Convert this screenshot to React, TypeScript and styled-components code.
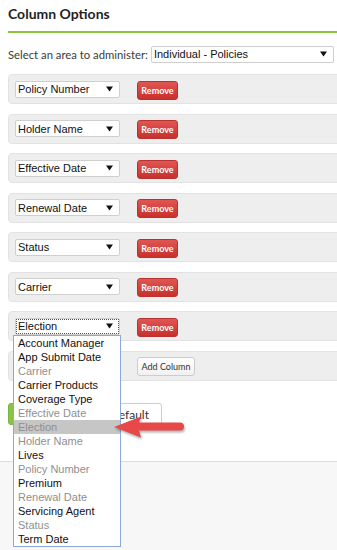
import { createGlobalStyle, styled } from 'styled-components';

const GlobalStyle = createGlobalStyle`
  html, body {
    margin: 0;
    padding: 0;
    background: #ffffff;
    overflow: hidden;
  }
  body {
    font-family: Lato, "Open Sans", sans-serif;
    color: #333333;
  }
  * {
    box-sizing: border-box;
  }
`;

type Option = { label: string; disabled?: boolean };

const OPTIONS: Option[] = [
  { label: 'Account Manager' },
  { label: 'App Submit Date' },
  { label: 'Carrier', disabled: true },
  { label: 'Carrier Products' },
  { label: 'Coverage Type' },
  { label: 'Effective Date', disabled: true },
  { label: 'Election', disabled: true },
  { label: 'Holder Name', disabled: true },
  { label: 'Lives' },
  { label: 'Policy Number', disabled: true },
  { label: 'Premium' },
  { label: 'Renewal Date', disabled: true },
  { label: 'Servicing Agent' },
  { label: 'Status', disabled: true },
  { label: 'Term Date' },
];

const COLUMNS = [
  'Policy Number',
  'Holder Name',
  'Effective Date',
  'Renewal Date',
  'Status',
  'Carrier',
];

const Caret = () => (
  <svg width="7" height="6" viewBox="0 0 7 6">
    <polygon points="0,0.5 7,0.5 3.5,5.5" fill="#111" />
  </svg>
);

const Select = ({
  value,
  width,
  focused,
  children,
}: {
  value: string;
  width: number;
  focused?: boolean;
  children?: React.ReactNode;
}) => (
  <SelectWrap $width={width}>
    <SelectBox $focused={focused}>
      <span>{value}</span>
      <Caret />
    </SelectBox>
    {children}
  </SelectWrap>
);

export default function App() {
  return (
    <>
      <GlobalStyle />
      <Page>
        <Main>
          <Title>Column Options</Title>
          <Rule />
          <AreaRow>
            <Label>Select an area to administer:</Label>
            <Select value="Individual - Policies" width={183} />
          </AreaRow>
          <ColumnList>
            {COLUMNS.map((col) => (
              <ColumnRow key={col}>
                <Select value={col} width={105} />
                <RemoveButton>Remove</RemoveButton>
              </ColumnRow>
            ))}
            <ColumnRow $raised>
              <Select value="Election" width={105} focused>
                <OptionList>
                  {OPTIONS.map((opt) => (
                    <OptionItem
                      key={opt.label}
                      $disabled={opt.disabled}
                      $selected={opt.label === 'Election'}
                    >
                      {opt.label}
                    </OptionItem>
                  ))}
                </OptionList>
              </Select>
              <RemoveButton>Remove</RemoveButton>
            </ColumnRow>
            <ColumnRow>
              <Select value="" width={105} />
              <GhostButton>Add Column</GhostButton>
            </ColumnRow>
          </ColumnList>
          <Actions>
            <SaveButton>Save</SaveButton>
            <DefaultButton>Reset Default</DefaultButton>
          </Actions>
          <Pointer width="76" height="30" viewBox="0 0 76 30">
            <path
              d="M2 13 L29 2.5 L27 8.5 L68 8.5 A4 4 0 0 1 68 16.5 L27 16.5 L29 23.5 Z"
              fill="#e84848"
            />
          </Pointer>
        </Main>
        <Footer />
      </Page>
    </>
  );
}

const Page = styled.div`
  width: 337px;
  height: 550px;
  display: flex;
  flex-direction: column;
`;

const Main = styled.main`
  position: relative;
  padding: 4px 0 0 8px;
  background: #ffffff;
`;

const Title = styled.h2`
  margin: 0;
  height: 20px;
  line-height: 20px;
  font-size: 14px;
  font-weight: 700;
  color: #1f1f1f;
`;

const Rule = styled.div`
  margin-top: 7px;
  height: 2px;
  background: #8cc63f;
`;

const AreaRow = styled.div`
  margin-top: 13px;
  display: flex;
  align-items: center;
  gap: 3px;
  height: 16px;
`;

const Label = styled.span`
  font-size: 11.3px;
  color: #3a3a3a;
  white-space: nowrap;
`;

const SelectWrap = styled.div<{ $width: number }>`
  position: relative;
  width: ${({ $width }) => $width}px;
  flex-shrink: 0;
`;

const SelectBox = styled.div<{ $focused?: boolean }>`
  height: 17px;
  display: flex;
  align-items: center;
  justify-content: space-between;
  padding: 0 6px 0 2px;
  background: #ffffff;
  border: 1px solid #cfcfcf;
  border-radius: 2px;
  font-family: "Liberation Sans", Arial, sans-serif;
  font-size: 11px;
  color: #111111;
  outline: ${({ $focused }) => ($focused ? '1px dotted #555' : 'none')};
  outline-offset: -2px;
`;

const OptionList = styled.ul`
  position: absolute;
  top: 100%;
  left: -2px;
  width: 108px;
  margin: 0;
  padding: 0;
  list-style: none;
  background: #ffffff;
  border: 1px solid #8aa8d8;
  z-index: 5;
`;

const OptionItem = styled.li<{ $disabled?: boolean; $selected?: boolean }>`
  height: 14px;
  line-height: 14px;
  padding-left: 4px;
  font-family: "Liberation Sans", Arial, sans-serif;
  font-size: 11px;
  color: ${({ $disabled }) => ($disabled ? '#8f8f8f' : '#111111')};
  background: ${({ $selected }) => ($selected ? '#c6c6c6' : 'transparent')};
  white-space: nowrap;
`;

const ColumnList = styled.div`
  margin-top: 12px;
  display: flex;
  flex-direction: column;
  gap: 9.57px;
`;

const ColumnRow = styled.div<{ $raised?: boolean }>`
  position: relative;
  z-index: ${({ $raised }) => ($raised ? 3 : 1)};
  height: 30px;
  margin-right: -8px;
  display: flex;
  align-items: center;
  gap: 17px;
  padding: 0 6px;
  background: #eeeeee;
  border: 1px solid #e2e2e2;
  border-radius: 4px;
`;

const RemoveButton = styled.button`
  height: 19px;
  width: 41px;
  margin-top: 2px;
  padding: 0;
  font-family: Lato, sans-serif;
  font-size: 9px;
  font-weight: 700;
  color: #ffffff;
  background: linear-gradient(#e05653, #c9302c);
  border: 1px solid #b8322f;
  border-radius: 3px;
`;

const GhostButton = styled.button`
  height: 19px;
  width: 58px;
  margin-top: 1px;
  padding: 0;
  font-family: Lato, sans-serif;
  font-size: 9px;
  color: #333333;
  background: linear-gradient(#ffffff, #f1f1f1);
  border: 1px solid #cccccc;
  border-radius: 3px;
`;

const Actions = styled.div`
  margin: 22px 0 35px;
  display: flex;
  gap: 6px;
`;

const SaveButton = styled.button`
  height: 22px;
  width: 48px;
  padding: 0;
  font-family: Lato, sans-serif;
  font-size: 12px;
  color: #ffffff;
  background: #8bc34a;
  border: 1px solid #7cb342;
  border-radius: 3px;
`;

const DefaultButton = styled.button`
  height: 23px;
  width: 100px;
  padding: 0 12px 0 0;
  text-align: right;
  font-family: Lato, sans-serif;
  font-size: 12px;
  color: #333333;
  background: #ffffff;
  border: 1px solid #cccccc;
  border-radius: 3px;
`;

const Pointer = styled.svg`
  position: absolute;
  left: 112px;
  top: 414px;
  z-index: 6;
  filter: drop-shadow(1px 2px 1px rgba(0, 0, 0, 0.3));
`;

const Footer = styled.footer`
  flex: 1;
  background: #f7f7f7;
  border-top: 1px solid #dddddd;
`;
